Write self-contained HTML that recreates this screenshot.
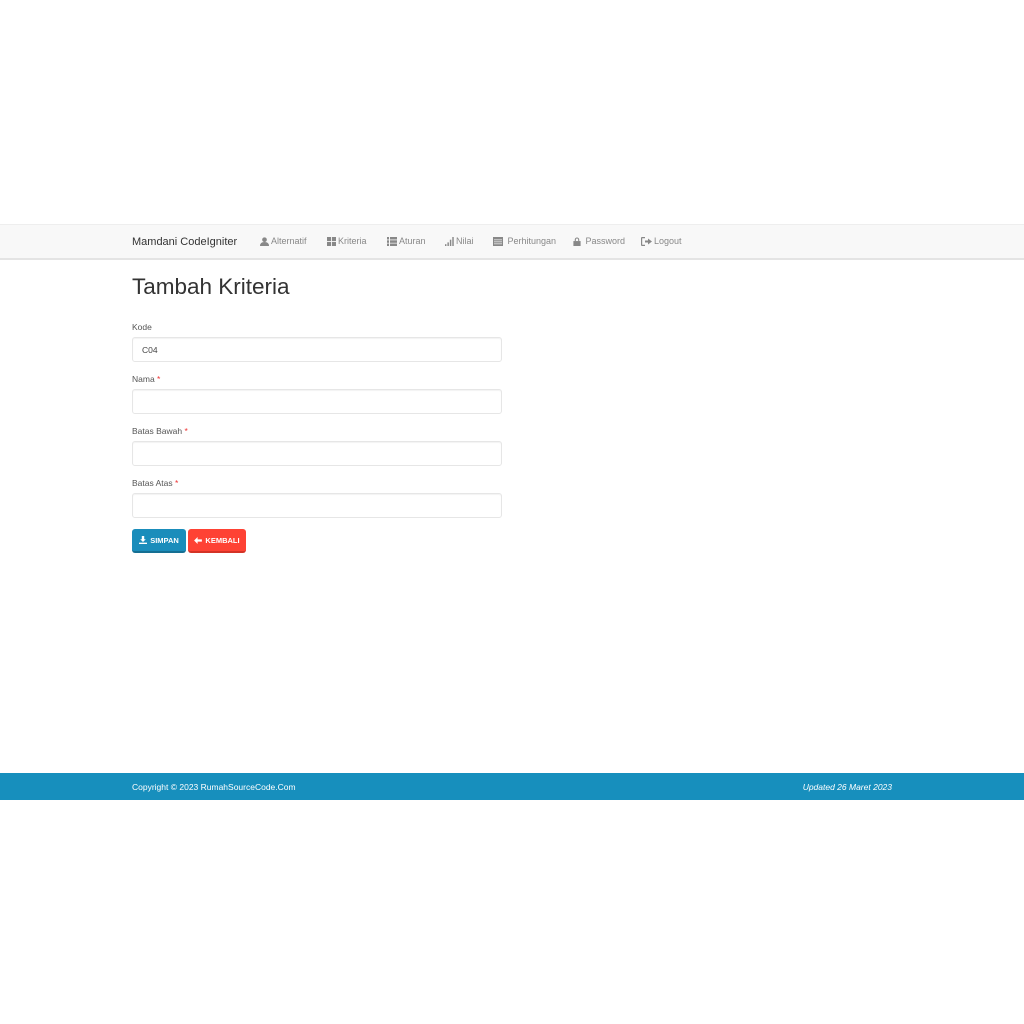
<!DOCTYPE html>
<html><head><meta charset="utf-8"><style>
*{box-sizing:border-box;margin:0;padding:0}
body{width:1024px;height:1024px;background:#fff;font-family:"Liberation Sans",sans-serif;position:relative;overflow:hidden}
.nav{position:absolute;top:224px;left:0;width:1024px;height:36px;background:#f8f8f8;border-top:1px solid #eee;border-bottom:2px solid #e4e4e4}
.brand{position:absolute;left:132px;top:10px;font-size:11px;color:#333;line-height:14px}
.item{position:absolute;top:11px;font-size:9px;color:#888;display:flex;align-items:center;gap:2px}
.item svg{fill:#888}
h1{position:absolute;left:132px;top:274px;font-size:22.5px;font-weight:normal;color:#333}
.lbl{position:absolute;left:132px;font-size:8.5px;color:#555}
.lbl b{color:#e33;font-weight:normal}
.inp{position:absolute;left:132px;width:370px;height:25px;border:1px solid #e6e6e6;border-radius:3px;box-shadow:inset 0 1px 1px rgba(0,0,0,.05);font-size:8.5px;color:#444;padding:7px 9px}
.btn{position:absolute;top:529px;height:24px;border-radius:3px;color:#fff;font-size:7.5px;font-weight:bold;display:flex;align-items:center;justify-content:center;gap:3px}
.footer{position:absolute;top:773px;left:0;width:1024px;height:27px;background:#178fbd;color:#fff;font-size:8.5px}
</style></head><body>
<div class="nav">
<div class="brand">Mamdani CodeIgniter</div>
<div class="item" style="left:260px"><svg width="9" height="9" viewBox="0 0 10 10"><circle cx="5" cy="3" r="2.6"/><path d="M0 10Q0 5.5 5 5.5T10 10z"/></svg>Alternatif</div>
<div class="item" style="left:327px"><svg width="9" height="9" viewBox="0 0 10 10"><rect width="4.5" height="4.5"/><rect x="5.5" width="4.5" height="4.5"/><rect y="5.5" width="4.5" height="4.5"/><rect x="5.5" y="5.5" width="4.5" height="4.5"/></svg>Kriteria</div>
<div class="item" style="left:387px"><svg width="10" height="9" viewBox="0 0 10 9"><rect width="2" height="2.5"/><rect x="3" width="7" height="2.5"/><rect y="3.3" width="2" height="2.5"/><rect x="3" y="3.3" width="7" height="2.5"/><rect y="6.5" width="2" height="2.5"/><rect x="3" y="6.5" width="7" height="2.5"/></svg>Aturan</div>
<div class="item" style="left:445px"><svg width="9" height="9" viewBox="0 0 10 10"><rect x="0" y="8" width="1.6" height="2"/><rect x="2.7" y="6" width="1.6" height="4"/><rect x="5.4" y="3" width="1.6" height="7"/><rect x="8.1" y="0" width="1.6" height="10"/></svg>Nilai</div>
<div class="item" style="left:493px"><svg width="10" height="9" viewBox="0 0 10 9"><rect width="10" height="9"/><g fill="#f8f8f8"><rect x="1" y="2.5" width="8" height=".7"/><rect x="1" y="4.5" width="8" height=".7"/><rect x="1" y="6.5" width="8" height=".7"/></g></svg>&nbsp;Perhitungan</div>
<div class="item" style="left:573px"><svg width="8" height="9" viewBox="0 0 8 10"><path d="M1.5 4.5V3a2.5 2.5 0 015 0v1.5H5.3V3a1.3 1.3 0 00-2.6 0v1.5z"/><rect y="4.5" width="8" height="5.5"/></svg>&nbsp;Password</div>
<div class="item" style="left:641px"><svg width="11" height="9" viewBox="0 0 11 9"><path d="M4 0H1Q0 0 0 1V8Q0 9 1 9H4V7.8H1.2V1.2H4z"/><path d="M4 3.5H7V1.5L11 4.5L7 7.5V5.5H4z"/></svg>Logout</div>
</div>
<h1>Tambah Kriteria</h1>
<div class="lbl" style="top:322px">Kode</div>
<div class="inp" style="top:337px">C04</div>
<div class="lbl" style="top:374px">Nama <b>*</b></div>
<div class="inp" style="top:389px"></div>
<div class="lbl" style="top:426px">Batas Bawah <b>*</b></div>
<div class="inp" style="top:441px"></div>
<div class="lbl" style="top:478px">Batas Atas <b>*</b></div>
<div class="inp" style="top:493px"></div>
<div class="btn" style="left:132px;width:54px;background:#1a8dbb;border-bottom:2px solid #156f93"><svg width="8" height="8" viewBox="0 0 10 10" fill="#fff"><path d="M3.5 0H6.5V4H8.5L5 7.5L1.5 4H3.5z"/><rect y="8.3" width="10" height="1.7"/></svg>SIMPAN</div>
<div class="btn" style="left:188px;width:58px;background:#fe4234;border-bottom:2px solid #d43326"><svg width="8" height="7" viewBox="0 0 10 9" fill="#fff"><path d="M0 4.5L4.5 0V3H10V6H4.5V9z"/></svg>KEMBALI</div>
<div class="footer"><span style="position:absolute;left:132px;top:9px">Copyright © 2023 RumahSourceCode.Com</span><span style="position:absolute;right:132px;top:9px;font-style:italic">Updated 26 Maret 2023</span></div>
</body></html>
